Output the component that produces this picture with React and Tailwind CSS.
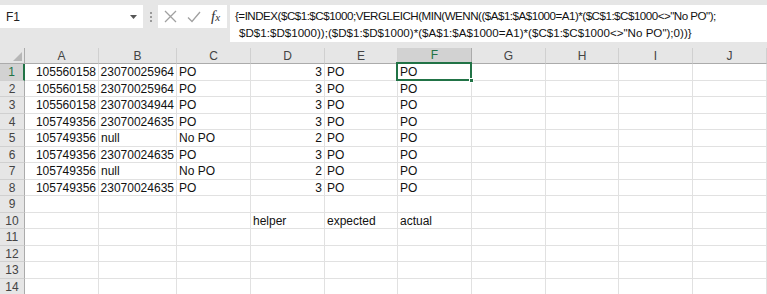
import React from "react";

const cols = ["A", "B", "C", "D", "E", "F", "G", "H", "I", "J"];
const widths = [74, 78, 74, 74, 73, 74, 74, 73, 74, 74];

const data = {
  1: ["105560158", "23070025964", "PO", "3", "PO", "PO"],
  2: ["105560158", "23070025964", "PO", "3", "PO", "PO"],
  3: ["105560158", "23070034944", "PO", "3", "PO", "PO"],
  4: ["105749356", "23070024635", "PO", "3", "PO", "PO"],
  5: ["105749356", "null", "No PO", "2", "PO", "PO"],
  6: ["105749356", "23070024635", "PO", "3", "PO", "PO"],
  7: ["105749356", "null", "No PO", "2", "PO", "PO"],
  8: ["105749356", "23070024635", "PO", "3", "PO", "PO"],
  10: ["", "", "", "helper", "expected", "actual"],
};

const isNum = (v) => /^\d+$/.test(v);

export default function App() {
  const rows = Array.from({ length: 14 }, (_, i) => i + 1);
  return (
    <div
      className="w-[767px] h-[294px] overflow-hidden bg-white text-[12px] text-black"
      style={{ fontFamily: '"Liberation Sans", Arial, sans-serif' }}
    >
      {/* formula bar */}
      <div className="h-[48px] bg-[#e6e6e6] flex items-start pt-[5px]">
        <div className="w-[143px] h-[23px] bg-white flex items-center justify-between pl-[6px] pr-[6px]">
          <span className="text-[12px] text-[#222]">F1</span>
          <svg width="7" height="4" viewBox="0 0 7 4">
            <path d="M0 0h7L3.5 4z" fill="#555" />
          </svg>
        </div>
        <div className="w-[15px] h-[23px] flex flex-col items-center justify-center gap-[2px]">
          <span className="w-[2px] h-[2px] bg-[#9a9a9a]" />
          <span className="w-[2px] h-[2px] bg-[#9a9a9a]" />
          <span className="w-[2px] h-[2px] bg-[#9a9a9a]" />
        </div>
        <div className="w-[69px] h-[23px] bg-white flex items-center pl-[6px] gap-[10px]">
          <svg width="13" height="13" viewBox="0 0 13 13">
            <path d="M1 1L12 12M12 1L1 12" stroke="#a0a0a0" strokeWidth="1.3" />
          </svg>
          <svg width="14" height="12" viewBox="0 0 14 12">
            <path d="M1 6.5L5 10.5L13 1" stroke="#a0a0a0" strokeWidth="1.3" fill="none" />
          </svg>
          <span
            className="italic text-[15px] text-[#333] leading-none"
            style={{ fontFamily: '"Liberation Serif", "Times New Roman", serif' }}
          >
            f<span className="text-[11px]">x</span>
          </span>
        </div>
        <div className="ml-[3px] flex-1 h-[37px] bg-white pl-[5px] pt-[2px] text-[11.6px] leading-[17px] text-[#111] whitespace-nowrap overflow-hidden">
          <div className="tracking-[-0.5px]">
            {'{=INDEX($C$1:$C$1000;VERGLEICH(MIN(WENN(($A$1:$A$1000=A1)*($C$1:$C$1000<>"No PO");'}
          </div>
          <div className="pl-[4px]">{'$D$1:$D$1000));($D$1:$D$1000)*($A$1:$A$1000=A1)*($C$1:$C$1000<>"No PO");0))}'}</div>
        </div>
      </div>

      {/* sheet */}
      <div
        className="grid"
        style={{ gridTemplateColumns: `25px ${widths.map((w) => w + "px").join(" ")}` }}
      >
        {/* header row */}
        <div className="h-[16px] bg-[#e6e6e6] border-r border-b border-[#ababab] relative">
          <svg className="absolute right-[2px] bottom-[2px]" width="9" height="9" viewBox="0 0 9 9">
            <path d="M9 0V9H0z" fill="#b7b7b7" />
          </svg>
        </div>
        {cols.map((c) => (
          <div
            key={c}
            className={
              c === "F"
                ? "h-[16px] bg-[#d2d2d2] border-r border-r-[#ababab] border-b-2 border-b-[#217346] flex items-center justify-center text-[#217346]"
                : "h-[16px] bg-[#e6e6e6] border-r border-r-[#d0d0d0] border-b border-b-[#ababab] flex items-center justify-center text-[#444]"
            }
          >
            {c}
          </div>
        ))}

        {rows.map((r) => {
          const h = r % 2 === 1 ? "h-[17px]" : "h-[16px]";
          const vals = data[r] || [];
          return (
            <React.Fragment key={r}>
              <div
                className={
                  r === 1
                    ? `${h} bg-[#d2d2d2] border-r-2 border-r-[#217346] border-b border-b-[#d0d0d0] flex items-center justify-center text-[#217346]`
                    : `${h} bg-[#e6e6e6] border-r border-r-[#ababab] border-b border-b-[#d0d0d0] flex items-center justify-center text-[#444]`
                }
              >
                {r}
              </div>
              {cols.map((c, ci) => {
                const v = vals[ci] || "";
                const selected = r === 1 && c === "F";
                return (
                  <div
                    key={c}
                    className={`${h} relative border-r border-b border-[#e1e1e1] flex items-center px-[2px] leading-none ${
                      isNum(v) ? "justify-end" : "justify-start"
                    }`}
                  >
                    <span className="text-[#111]">{v}</span>
                    {selected && (
                      <div className="absolute left-[-2px] top-[-2px] right-[-1px] bottom-[-1px] border-2 border-[#217346] z-10">
                        <div className="absolute right-[-4px] bottom-[-4px] w-[5px] h-[5px] bg-[#217346] border border-white" />
                      </div>
                    )}
                  </div>
                );
              })}
            </React.Fragment>
          );
        })}
      </div>
    </div>
  );
}
